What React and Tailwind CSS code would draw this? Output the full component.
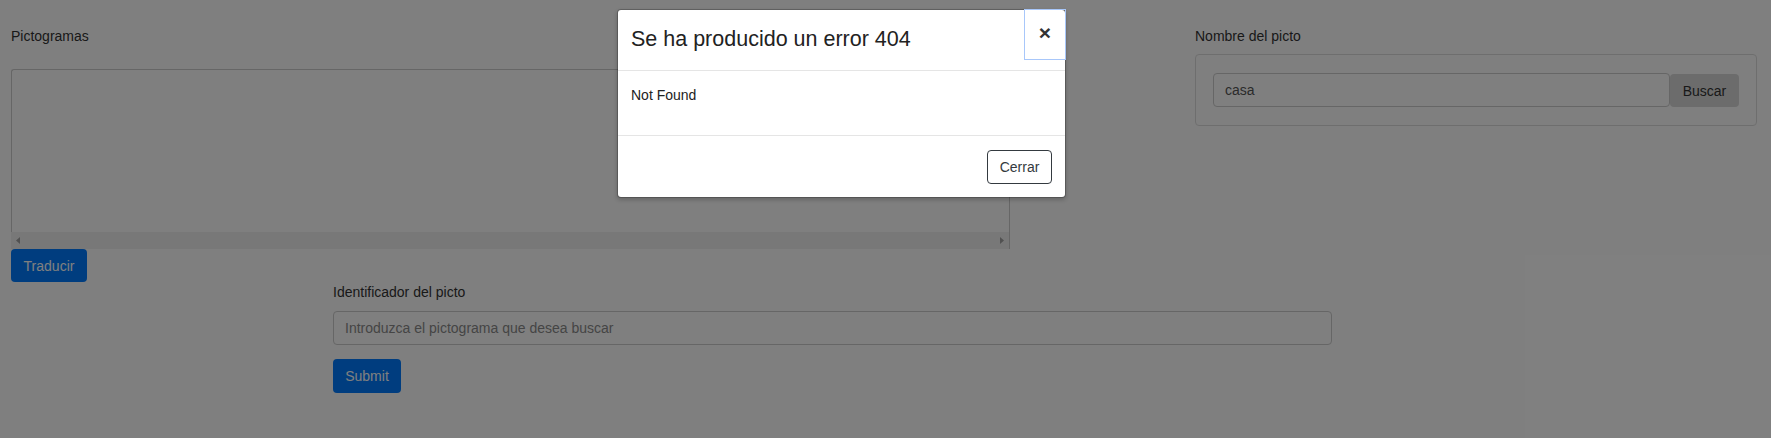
import { useState } from "react";

// Flecha de la barra de scroll (estilo Chrome clásico)
const ScrollArrow = ({ dir }) => (
  <svg width="4" height="7" viewBox="0 0 4 7">
    <path d={dir === "left" ? "M4 0V7L0 3.5Z" : "M0 0V7L4 3.5Z"} fill="#a3a3a3" />
  </svg>
);

const App = () => {
  const [nombre, setNombre] = useState("casa"); // término de búsqueda
  const [id, setId] = useState(""); // identificador del picto
  const [open, setOpen] = useState(true); // modal de error

  return (
    <div className="relative h-[438px] w-full overflow-hidden bg-white font-['Liberation_Sans',Arial,sans-serif] text-[14px] leading-5 text-[#333]">
      <div className="flex pt-[26px]">
        {/* Columna izquierda: pictogramas */}
        <div className="ml-[11px] w-[999px]">
          <p>Pictogramas</p>
          <div className="mt-[23px] h-[180px] border-r border-[#cccccc]">
            <div className="h-[163px] rounded-tl-[3px] border-l border-t border-[#cccccc]" />
            <div className="flex h-[17px] items-center justify-between bg-[#f1f1f1] px-[5px]">
              <ScrollArrow dir="left" />
              <ScrollArrow dir="right" />
            </div>
          </div>
          <button className="h-[33px] w-[76px] rounded-[4px] bg-[#007bff] text-white">
            Traducir
          </button>
        </div>

        {/* Columna derecha: búsqueda por nombre */}
        <div className="ml-[185px] w-[562px]">
          <p>Nombre del picto</p>
          <div className="mt-2 flex rounded-[4px] border border-[#dddddd] px-[17px] py-[18px]">
            <input
              type="text"
              value={nombre}
              onChange={(e) => setNombre(e.target.value)}
              className="h-[34px] w-[457px] rounded-[4px] border border-[#cccccc] px-[11px] text-[#555] outline-none"
            />
            <button className="mt-px h-[33px] w-[69px] rounded-[4px] bg-[#d9d9d9] text-[#333]">
              Buscar
            </button>
          </div>
        </div>
      </div>

      {/* Formulario por identificador */}
      <form className="ml-[333px] w-[999px]" onSubmit={(e) => e.preventDefault()}>
        <label className="block">Identificador del picto</label>
        <input
          type="text"
          value={id}
          onChange={(e) => setId(e.target.value)}
          placeholder="Introduzca el pictograma que desea buscar"
          className="mt-[9px] h-[34px] w-full rounded-[4px] border border-[#cccccc] px-[11px] text-[#555] outline-none placeholder:text-[#8a8a8a]"
        />
        <button type="submit" className="mt-[14px] h-[34px] w-[68px] rounded-[4px] bg-[#007bff] text-white">
          Submit
        </button>
      </form>

      {open && (
        <>
          <div className="absolute inset-0 bg-black/50" />
          <div className="absolute left-[617px] top-[9px] w-[449px] rounded-[4px] border border-black/20 bg-white bg-clip-padding shadow-[0_2px_4px_rgba(0,0,0,0.2)]">
            <div className="relative h-[61px] border-b border-[#e5e5e5] pl-[13px] pt-[14px]">
              <h4 className="text-[21.5px] leading-[30px] text-[#222]">Se ha producido un error 404</h4>
              <button
                onClick={() => setOpen(false)}
                className="absolute right-[-1px] top-[-1px] flex h-[51px] w-[42px] items-center justify-center border border-[#a8c7fa] pb-[3px] text-[21px] font-bold text-[#333]"
              >
                ×
              </button>
            </div>
            <div className="h-[65px] border-b border-[#e5e5e5] pl-[13px] pt-[14px] text-[#222]">
              Not Found
            </div>
            <div className="flex justify-end pb-[13px] pr-[13px] pt-[14px]">
              <button
                onClick={() => setOpen(false)}
                className="h-[34px] w-[65px] rounded-[4px] border border-[#343a40] text-[#343a40]"
              >
                Cerrar
              </button>
            </div>
          </div>
        </>
      )}
    </div>
  );
};

export default App;
